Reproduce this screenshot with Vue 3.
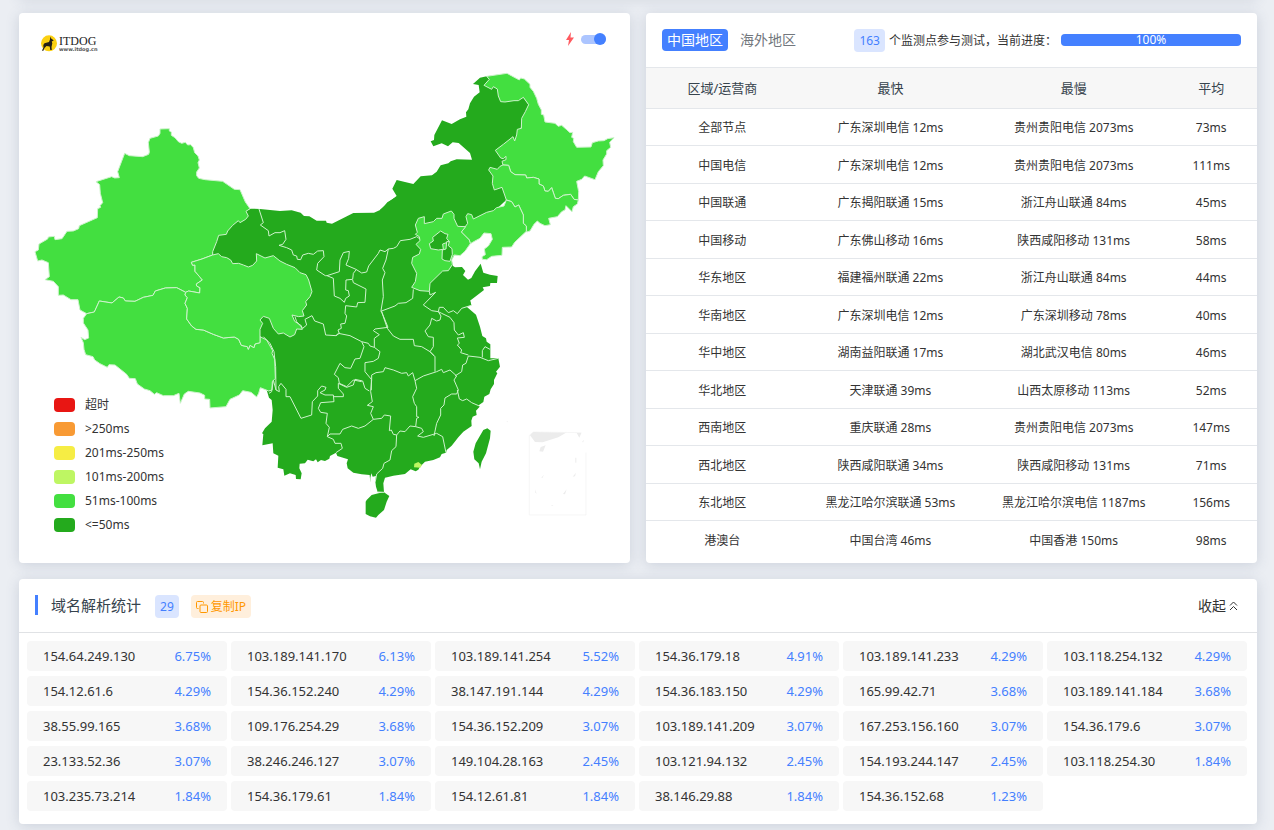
<script setup>
import { ref } from 'vue'

const animate = ref(true)
const collapsed = ref(false)
const region = ref('cn')
const progress = ref(100)

const legend = [
  ['timeout', '超时'],
  ['over250', '>250ms'],
  ['to250', '201ms-250ms'],
  ['to200', '101ms-200ms'],
  ['to100', '51ms-100ms'],
  ['to50', '<=50ms'],
]

const rows = [
  ['全部节点', '广东深圳电信 12ms', '贵州贵阳电信 2073ms', '73ms'],
  ['中国电信', '广东深圳电信 12ms', '贵州贵阳电信 2073ms', '111ms'],
  ['中国联通', '广东揭阳联通 15ms', '浙江舟山联通 84ms', '45ms'],
  ['中国移动', '广东佛山移动 16ms', '陕西咸阳移动 131ms', '58ms'],
  ['华东地区', '福建福州联通 22ms', '浙江舟山联通 84ms', '44ms'],
  ['华南地区', '广东深圳电信 12ms', '广东深圳移动 78ms', '40ms'],
  ['华中地区', '湖南益阳联通 17ms', '湖北武汉电信 80ms', '46ms'],
  ['华北地区', '天津联通 39ms', '山西太原移动 113ms', '52ms'],
  ['西南地区', '重庆联通 28ms', '贵州贵阳电信 2073ms', '147ms'],
  ['西北地区', '陕西咸阳联通 34ms', '陕西咸阳移动 131ms', '71ms'],
  ['东北地区', '黑龙江哈尔滨联通 53ms', '黑龙江哈尔滨电信 1187ms', '156ms'],
  ['港澳台', '中国台湾 46ms', '中国香港 150ms', '98ms'],
]

const ips = [
  ['154.64.249.130', '6.75%'], ['103.189.141.170', '6.13%'], ['103.189.141.254', '5.52%'],
  ['154.36.179.18', '4.91%'], ['103.189.141.233', '4.29%'], ['103.118.254.132', '4.29%'],
  ['154.12.61.6', '4.29%'], ['154.36.152.240', '4.29%'], ['38.147.191.144', '4.29%'],
  ['154.36.183.150', '4.29%'], ['165.99.42.71', '3.68%'], ['103.189.141.184', '3.68%'],
  ['38.55.99.165', '3.68%'], ['109.176.254.29', '3.68%'], ['154.36.152.209', '3.07%'],
  ['103.189.141.209', '3.07%'], ['167.253.156.160', '3.07%'], ['154.36.179.6', '3.07%'],
  ['23.133.52.36', '3.07%'], ['38.246.246.127', '3.07%'], ['149.104.28.163', '2.45%'],
  ['103.121.94.132', '2.45%'], ['154.193.244.147', '2.45%'], ['103.118.254.30', '1.84%'],
  ['103.235.73.214', '1.84%'], ['154.36.179.61', '1.84%'], ['154.12.61.81', '1.84%'],
  ['38.146.29.88', '1.84%'], ['154.36.152.68', '1.23%'],
]
</script>

<template>
  <main class="page">
    <div class="card above"></div>

    <div class="overview">
      <section class="card map-card">
        <svg class="map" viewBox="19 13 611 550" role="img" aria-label="中国地区延迟地图">
          <!-- provinces at 50ms or less -->
          <g class="low">
            <path transform="translate(180 190) scale(.33333)" d="M212 56L240 57L300 63L335 61L362 68L372 78L388 79L410 92L438 92L440 98L456 101L520 69L582 68L605 58L622 37L650 20L660 0L750 0L750 600L280 600L240 440L200 300L92 205L85 140L180 70Z" />
            <path transform="translate(380 60) scale(.33333)" d="M0 449L25 427L50 408L37 386L50 360L100 372L122 349L156 346L170 335L182 316L205 310L212 304L230 298L276 299L270 279L236 249L218 247L204 259L185 250L160 259L152 244L162 240L163 225L186 181L215 192L240 178L259 170L258 157L265 148L270 130L282 110L299 97L296 75L279 72L300 53L320 49L340 70L430 112L446 134L420 210L400 400L250 540L215 600L219 618L225 622L246 621L256 633L249 645L264 659L274 654L285 634L302 611L310 638L330 644L353 648L351 669L331 669L330 678L308 682L312 690L270 722L274 736L0 736Z" />
            <path transform="translate(250 300) scale(.33333)" d="M60 0L660 0L664 16L650 20L678 44L690 80L697 108L708 115L710 125L721 133L721 175L745 175L750 200L738 215L742 220L732 240L732 252L722 268L718 282L703 290L700 306L686 316L689 320L678 332L680 345L668 350L664 362L665 378L640 395L625 412L605 437L590 450L588 458L575 462L570 472L550 480L525 485L510 500L505 509L497 514L482 508L465 522L430 527L405 533L400 550L402 577L383 576L378 560L376 545L378 528L368 530L364 520L361 533L361 548L359 525L335 523L310 518L293 505L290 490L294 478L262 468L258 458L240 468L238 476L225 483L213 480L203 487L198 478L190 484L173 479L165 490L149 491L148 505L155 520L152 538L138 537L137 525L120 520L103 527L100 508L83 503L85 467L70 460L68 430L37 436L40 402L36 400L45 385L65 365L68 330L65 300L57 293L50 270L40 200Z" />
            <path transform="translate(250 300) scale(.33333)" d="M350 600L365 585L385 580L402 577L418 588L410 605L402 630L385 645L378 653L360 649L347 642L347 605ZM700 390L712 385L722 392L720 415L708 460L695 485L690 508L686 490L673 478L670 455L677 430Z" />
          </g>
          <!-- western provinces -->
          <g class="mid" transform="translate(0 110) scale(.33333)">
            <path d="M480 57L508 56L508 63L514 66L514 76L525 83L535 95L545 100L556 97L563 105L572 104L580 113L584 128L594 138L598 150L594 158L598 174L590 186L590 197L596 205L615 209L668 214L703 238L720 239L736 276L750 296L738 304L745 318L737 328L720 338L715 332L698 346L683 363L679 373L656 376L650 395L638 425L638 435L606 447L574 457L578 466L585 465L585 484L597 497L607 510L589 522L590 528L600 533L599 549L566 543L557 547L530 533L496 534L466 543L459 556L430 562L405 574L376 573L370 564L357 561L336 579L298 573L283 606L260 611L240 600L234 569L213 569L190 555L175 556L175 530L160 514L135 509L148 500L145 458L126 450L113 453L105 425L115 420L117 402L143 387L145 381L163 379L165 389L186 386L201 364L220 363L236 356L238 347L292 323L293 296L302 292L300 287L308 278L301 250L299 224L288 215L335 200L344 204L358 203L353 185L374 130L388 137L428 140L446 133L448 126L445 98L450 85L475 78L480 70Z" />
            <path d="M260 611L283 606L298 573L336 579L357 561L370 564L376 573L405 574L430 562L459 556L466 543L496 534L530 533L557 547L555 555L562 563L555 580L562 595L560 627L575 648L588 658L610 660L640 673L670 684L703 681L716 688L724 706L742 710L745 718L750 706L762 713L765 702L780 698L780 680L800 690L818 722L816 730L824 748L826 805L817 815L816 840L806 843L781 833L776 850L770 861L753 847L728 842L718 855L690 868L678 890L630 894L629 868L614 867L614 856L600 849L565 844L553 852L541 880L537 850L520 857L490 857L470 848L463 853L450 842L433 837L412 822L406 806L388 805L380 793L345 765L327 764L322 772L300 761L284 750L279 740L257 734L252 718L250 698L243 682L254 689L266 684L264 660L250 639L250 625Z" />
            <path d="M638 435L655 431L665 440L680 443L692 450L698 461L716 460L730 465L745 471L758 466L770 453L769 431L795 444L820 437L840 453L860 463L885 473L900 488L918 494L926 510L936 545L930 560L917 575L920 585L907 602L912 618L896 620L876 615L884 634L904 647L907 658L890 657L884 674L870 681L850 669L835 672L820 655L808 625L790 619L780 630L788 640L780 658L780 698L765 702L762 713L750 706L745 718L742 710L724 706L716 688L703 681L670 684L640 673L610 660L588 658L575 648L560 627L562 595L555 580L562 563L555 555L557 547L566 543L599 549L600 533L590 528L589 522L607 510L585 484L585 465L578 466L574 457L606 447Z" />
          </g>
          <!-- northeast and Hebei -->
          <g class="mid" transform="translate(380 60) scale(.33333)">
            <path d="M320 49L381 40L405 53L418 60L422 54L433 57L450 73L450 82L460 94L470 115L475 133L484 150L484 163L491 165L495 186L525 190L535 199L545 196L560 209L570 218L578 217L575 232L581 235L580 245L590 262L633 261L637 248L655 243L672 242L683 236L702 233L689 247L692 262L680 272L680 282L669 300L670 317L655 335L645 359L614 348L605 358L590 364L596 395L595 420L582 418L572 403L560 404L550 406L535 416L526 415L515 383L505 394L495 393L490 378L477 372L477 357L460 352L440 354L437 345L405 344L392 335L386 316L369 315L366 304L378 299L378 289L370 296L362 294L346 271L370 253L399 230L404 243L410 225L412 208L424 205L425 175L436 155L446 134L430 112L415 122L402 122L375 126L362 125L355 108L352 87L340 80L335 88L312 76L328 58Z" />
            <path d="M369 315L386 316L392 335L405 344L437 345L440 354L460 352L477 357L477 372L490 378L495 393L505 394L515 383L526 415L535 416L550 406L572 403L582 418L595 420L592 432L580 440L576 455L558 437L555 450L545 455L532 470L506 475L511 494L495 497L480 490L472 483L462 493L450 513L440 516L439 498L430 490L430 465L416 435L405 441L395 425L379 420L375 408L366 382L343 390L337 370L339 348L326 330L330 322L352 328L360 319Z" />
            <path d="M379 420L395 425L405 441L416 435L430 465L430 490L439 498L439 514L404 547L395 561L367 562L366 586L335 589L320 599L307 598L306 590L316 584L313 567L325 558L337 538L333 521L312 519L300 535L285 543L271 551L268 540L244 516L263 490L258 470L263 461L275 464L280 477L320 457L340 452L350 443L372 438Z" />
            <path d="M133 491L160 485L170 475L186 475L190 462L214 453L222 463L222 475L233 499L257 500L244 516L268 540L271 551L255 574L240 587L222 585L215 600L217 614L205 632L188 633L150 670L148 694L120 692L95 682L106 665L110 640L95 610L98 592L118 582L122 568L108 553L120 542L118 530L106 523L112 517L106 495L115 475L133 470Z" />
          </g>
          <g class="low edged" transform="translate(380 60) scale(.33333)">
            <path d="M182 513L195 521L204 523L200 535L208 545L188 552L190 568L175 570L152 566L148 551L160 543L158 532Z" />
            <path d="M200 545L208 545L205 557L216 566L217 583L210 604L195 602L186 597L187 570L198 567Z" />
          </g>
          <!-- province borders -->
          <g class="border">
            <path transform="translate(180 190) scale(.33333)" d="M237 57L250 98L241 105L265 122L267 138L285 128L300 128L314 122L318 148L308 163L297 166L320 173L335 180L340 195L350 198L352 208L362 209L368 195L385 190L400 193L413 183L430 182L432 200L413 220L410 240L436 257L441 257L478 245L480 210L490 188L508 184L506 205L498 225L528 238L545 249L560 246L566 228L595 190L600 180L615 185L625 177L640 175L650 170L661 152L690 148L710 140L720 147M441 257L460 265L463 318L480 325L493 337L497 325L508 318L505 302L497 300L498 270L518 268L520 250L528 240M518 270L520 278L558 297L555 337L533 338L530 351L497 347L495 370L500 378L495 400L482 402L484 415L474 420L478 430L468 437M345 380L350 395L368 415L380 405L375 388L396 377L404 393L430 402L437 435L468 437L475 430L510 437L545 455L565 460L570 468L583 472M625 177L618 210L608 235L615 248L607 270L610 320L603 362L610 378L624 412L585 417L580 422L598 434L583 445L583 472L600 485L595 505L580 514L555 518L555 545L574 568L574 600M545 455L552 470L540 505L525 507L512 535L495 533L480 520L463 553L475 563L478 580L500 590L520 570L545 575" />
            <path transform="translate(370 200) scale(.33333)" d="M32 334L75 318L85 310L108 308L128 295L130 268M35 334L40 350L52 385L70 408L90 418L130 418L133 437L155 440L180 455L193 468M178 274L180 285L197 277L160 315L185 332L205 335L208 322L220 322L235 338L250 332L262 341L275 325L304 316M205 335L213 348L210 360L200 363L185 355L180 375L165 393L175 410L190 412L190 440L180 455" />
            <path transform="translate(250 300) scale(.33333)" d="M40 110L60 130L72 155L77 200L78 270L88 275L86 260L93 250L108 268L108 290L120 290L153 355L185 345L187 305L203 288L203 272L215 258L228 262L225 270L210 278L225 285L250 285L252 305L212 308L205 325L212 337L232 340L228 370L238 382L232 410L250 418L255 430L273 430L277 445L258 458M78 270L70 240L65 275L57 280M232 410L240 402L270 402L278 388L305 378L325 385L345 378L370 358L395 355L403 345L422 348L418 392L424 390L430 403L440 405M370 358L362 340L370 320L352 316L367 305L362 275L365 240L365 225L378 218L400 215L405 203L430 210L455 220L470 218L475 228L488 218L495 242L520 228L560 215L575 208L580 218L600 210L620 228L612 240L625 270L620 282L605 282L585 294L582 315L572 325L572 345L560 370L552 408M252 290L280 290L280 282L265 265L265 250L290 262L310 255L315 238L338 243L345 265L358 273M495 242L500 265L488 290L493 310L500 320L500 350L507 352L500 355L497 380L515 385L520 395L503 408L520 412L560 400L578 410L588 458M440 405L450 393L465 395L480 378L497 380M440 405L438 440L425 452L420 480L402 490L398 505L380 522L376 545M622 270L628 297L638 302L650 297L665 308L688 318M615 228L635 215L638 195L648 190L655 168L690 172L715 182L745 175M697 172L697 152L705 140L720 148M540 155L555 170L555 215M565 35L575 40L600 52L612 68L613 90L625 105L640 98L643 112L622 114L628 130L622 135L635 150L632 158L655 165M402 577L383 576" />
          </g>
          <path class="hong-kong" transform="translate(250 300) scale(.33333)" d="M493 491L505 486L516 495L511 503L492 502Z" />
          <!-- South China Sea inset -->
          <g transform="translate(470 410) scale(.33333)">
            <path class="inset-frame" d="M178 76L190 66L334 68M348 128V315H178V76" />
            <path class="inset-land" d="M180 76L190 66L288 68L265 82L218 97L195 96ZM320 69H334L328 83ZM212 111L227 106L219 125L208 124ZM337 94L342 90L339 98ZM316 143H319V158H316ZM308 200L318 188L315 199ZM279 252L290 238L285 253ZM195 238L200 251L196 248ZM214 203L222 194L217 204ZM242 288L251 284L247 288ZM109 35L113 33V37Z" />
          </g>
          <!-- logo -->
          <circle cx="49" cy="43.300" r="8" fill="#fbd011" />
          <path fill="#241f18" d="M50.300 36.500L51.200 38.500L53.500 40.300L53.200 41L51.800 41.200L52.300 43.500L51.500 47L51.800 50H50.300L49.700 46.500L46.500 46L44.500 48L43.200 51L42 50.500L43.500 47.500L43.300 45L44.500 43.300L49 42L50 39.500Z" />
          <text class="brand" x="59" y="45">ITDOG</text>
          <text class="brand-url" x="59" y="51">www.itdog.cn</text>
        </svg>

        <label class="toggle">
          <svg width="8" height="14" viewBox="0 0 8 14" aria-hidden="true">
            <path d="M5 0L0 8H3L2 14L8 5.500H4.500Z" fill="#ff5a5f" />
          </svg>
          <input v-model="animate" type="checkbox" aria-label="动态效果" />
        </label>

        <ul class="legend">
          <li v-for="[level, label] in legend" :key="level">
            <span class="swatch" :class="level"></span>{{ label }}
          </li>
        </ul>
      </section>

      <section class="card stats">
        <header class="stats-head">
          <nav class="tabs">
            <button type="button" :class="{ active: region === 'cn' }" @click="region = 'cn'">中国地区</button>
            <button type="button" :class="{ active: region === 'os' }" @click="region = 'os'">海外地区</button>
          </nav>
          <div class="status">
            <span class="badge">163</span>
            <span class="status-text">个监测点参与测试，当前进度：</span>
            <div class="progress" role="progressbar" :aria-valuenow="progress" aria-label="当前进度">
              <div class="bar" :style="{ width: progress + '%' }">{{ progress }}%</div>
            </div>
          </div>
        </header>
        <table>
          <thead>
            <tr><th>区域/运营商</th><th>最快</th><th>最慢</th><th>平均</th></tr>
          </thead>
          <tbody>
            <tr v-for="row in rows" :key="row[0]">
              <td v-for="(cell, i) in row" :key="i">{{ cell }}</td>
            </tr>
          </tbody>
        </table>
      </section>
    </div>

    <section class="card dns">
      <header class="dns-head">
        <h2>域名解析统计</h2>
        <span class="badge">{{ ips.length }}</span>
        <button type="button" class="copy">
          <svg width="12" height="12" viewBox="0 0 12 12" fill="none" stroke="currentColor" aria-hidden="true">
            <rect x="4" y="4" width="7.500" height="7.500" rx="1" />
            <path d="M2.500 7.500H1.500Q.5 7.500 .5 6.500V1.500Q.5 .5 1.500 .5H6.500Q7.500 .5 7.500 1.500V2.500" />
          </svg>复制IP
        </button>
        <button type="button" class="collapse" @click="collapsed = !collapsed">
          收起<svg width="9" height="10" viewBox="0 0 9 10" fill="none" stroke="currentColor" aria-hidden="true">
            <path d="M1 4.500L4.500 1L8 4.500M1 9L4.500 5.500L8 9" />
          </svg>
        </button>
      </header>
      <ul v-show="!collapsed" class="ips">
        <li v-for="[ip, share] in ips" :key="ip"><span>{{ ip }}</span><span class="share">{{ share }}</span></li>
      </ul>
    </section>
  </main>
</template>

<style>
body {
  background: #ebeef3;
}
</style>

<style scoped>
.page {
  display: flow-root;
  padding: 0 17px 6px 19px;
  font: 12px/18px "Noto Sans", "Noto Sans CJK SC", sans-serif;
  color: #333;
}
.card {
  position: relative;
  background: #fff;
  border-radius: 4px;
  box-shadow: 0 2px 14px rgba(60, 80, 110, 0.18);
}
.above {
  height: 10px;
  margin-top: -13px;
}
.overview {
  display: grid;
  grid-template-columns: 1fr 1fr;
  gap: 16px;
  margin: 16px 0;
}
button {
  border: 0;
  background: none;
  font: inherit;
  color: inherit;
  padding: 0;
  cursor: pointer;
}
ul {
  list-style: none;
  margin: 0;
  padding: 0;
}

.map {
  display: block;
  width: 100%;
}
.low {
  fill: #24aa1d;
}
.mid {
  fill: #43df40;
}
.mid,
.edged,
.border {
  stroke: #cdf3cb;
  stroke-linejoin: round;
}
.mid path,
.edged path,
.border path {
  vector-effect: non-scaling-stroke;
  stroke-width: 1px;
}
.border {
  fill: none;
}
.hong-kong {
  fill: #bdf763;
}
.inset-frame {
  fill: none;
  stroke: #f1f1f1;
  stroke-width: 2px;
}
.inset-land {
  fill: #ececec;
}
.brand {
  font: 12px "Liberation Serif", serif;
  fill: #222;
}
.brand-url {
  font: bold 5px "DejaVu Sans", sans-serif;
  fill: #555;
}
.toggle {
  position: absolute;
  top: 19px;
  right: 24px;
  display: flex;
  align-items: center;
  gap: 7px;
}
.toggle input {
  appearance: none;
  display: flex;
  align-items: center;
  width: 25px;
  height: 9px;
  margin: 0;
  border-radius: 5px;
  background: #acc5ff;
}
.toggle input::before {
  content: "";
  width: 12px;
  height: 12px;
  flex: none;
  border-radius: 50%;
  background: #4480ff;
}
.toggle input:checked {
  justify-content: flex-end;
}
.legend {
  position: absolute;
  left: 35px;
  bottom: 26px;
}
.legend li {
  display: flex;
  align-items: center;
  gap: 10px;
  height: 24px;
}
.swatch {
  width: 21px;
  height: 14px;
  border-radius: 4px;
}
.timeout { background: #e81613; }
.over250 { background: #f89a34; }
.to250 { background: #f6ed44; }
.to200 { background: #bef663; }
.to100 { background: #43df40; }
.to50 { background: #24aa1d; }

.stats-head {
  display: flex;
  align-items: center;
  justify-content: space-between;
  height: 54px;
  padding: 0 16px;
  border-bottom: 1px solid #e4e7eb;
}
.tabs {
  display: flex;
  gap: 7px;
  font-size: 14px;
  color: #72777d;
}
.tabs button {
  height: 22px;
  padding: 0 5px;
  border-radius: 4px;
  line-height: 22px;
}
.tabs .active {
  background: #4480ff;
  color: #fff;
}
.status {
  display: flex;
  align-items: center;
}
.badge {
  padding: 0 5px;
  border-radius: 4px;
  background: #dae5ff;
  color: #4480ff;
  line-height: 23px;
}
.status-text {
  margin: 0 4px;
  padding-top: 2px;
}
.progress {
  width: 180px;
  border-radius: 4px;
  background: #e9ecef;
}
.bar {
  height: 12px;
  border-radius: 4px;
  background: #4480ff;
  color: #fff;
  line-height: 12px;
  text-align: center;
}
table {
  width: 100%;
  table-layout: fixed;
  border-collapse: separate;
  border-spacing: 0;
  text-align: center;
}
th,
td {
  padding: 0;
  border-bottom: 1px solid #e4e7eb;
}
th {
  width: 30%;
  height: 40px;
  background: #f7f7f7;
  font-size: 13px;
  font-weight: 400;
  color: #36434d;
}
th:first-child {
  width: 25%;
}
th:last-child {
  width: 15%;
}
td {
  height: 34px;
  padding-top: 2px;
}
tr:nth-child(even) td {
  height: 35px;
}
tr:last-child td {
  border-bottom: 0;
}

.dns-head {
  display: flex;
  align-items: flex-start;
  padding: 16px 19px 14px 16px;
  border-bottom: 1px solid #e0e2e5;
}
h2 {
  margin: 0 14px 0 0;
  padding-left: 13px;
  border-left: 3px solid #4480ff;
  font-size: 15px;
  font-weight: 400;
  line-height: 20px;
  color: #36434d;
}
.copy {
  display: flex;
  align-items: center;
  gap: 3px;
  height: 23px;
  margin-left: 12px;
  padding: 0 5px;
  border-radius: 4px;
  background: #ffefdc;
  color: #ff9800;
}
.collapse {
  display: flex;
  align-items: center;
  gap: 3px;
  height: 22px;
  margin-left: auto;
  font-size: 14px;
}
.ips {
  display: grid;
  grid-template-columns: repeat(6, 1fr);
  gap: 5px 4px;
  padding: 8px 10px 13px 8px;
}
.ips li {
  display: flex;
  justify-content: space-between;
  padding: 0 16px;
  border-radius: 4px;
  background: #f7f7f7;
  font-size: 13px;
  line-height: 30px;
}
.share {
  color: #4480ff;
}
</style>
